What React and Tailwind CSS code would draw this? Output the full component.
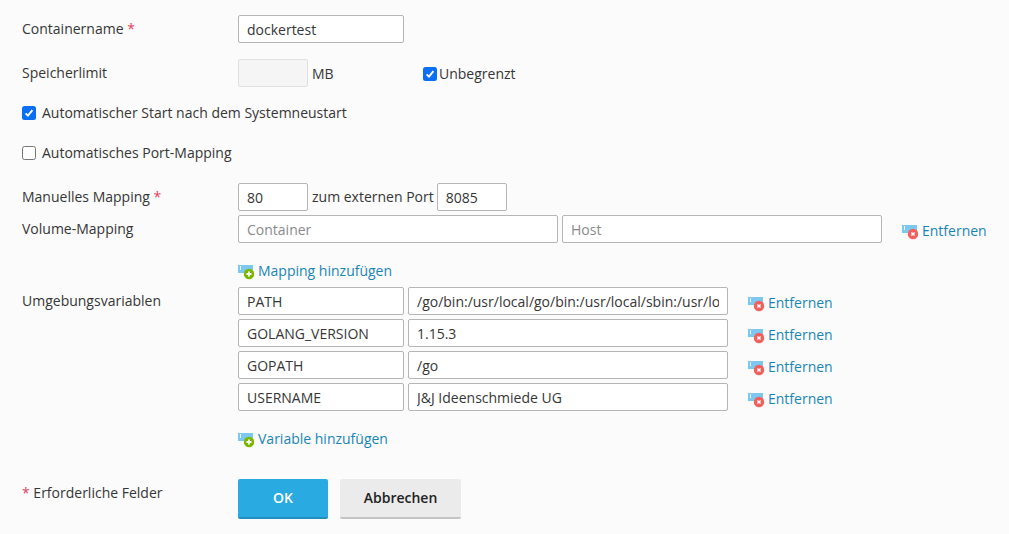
const inputCls = "h-[28px] box-border rounded-[2px] border border-[#b5b5b5] bg-white px-2 text-[14px] leading-[26px] text-[#363636] outline-none placeholder:text-[#8a8a8a] [font-family:'Open_Sans',sans-serif]";

function Field({ value, placeholder, className }) {
  return <input readOnly value={value} placeholder={placeholder} className={`${inputCls} ${className}`} />;
}

function Check({ checked }) {
  return checked ? (
    <span className="flex h-[14px] w-[14px] shrink-0 items-center justify-center rounded-[2.5px] bg-[#0b6ff5]">
      <svg width="10" height="10" viewBox="0 0 10 10" fill="none">
        <path d="M1.6 5.3 L4 7.7 L8.4 2.2" stroke="#fff" strokeWidth="1.9" />
      </svg>
    </span>
  ) : (
    <span className="h-[14px] w-[14px] shrink-0 rounded-[2.5px] border border-[#767676] bg-white" />
  );
}

function BaseIcon({ color, children }) {
  return (
    <svg width="16" height="15" viewBox="0 0 16 15" className="shrink-0 translate-y-px">
      <rect x="0" y="0" width="15" height="8" fill="#7cc8ee" />
      <rect x="2" y="1" width="1" height="4" fill="#e8f6fd" />
      <circle cx="11" cy="9" r="5.2" fill={color} />
      {children}
    </svg>
  );
}

function LinkAction({ kind, label, className = "" }) {
  return (
    <a className={`flex items-center gap-[4px] text-[14px] leading-[20px] text-[#1a85b5] ${className}`}>
      {kind === "add" ? (
        <BaseIcon color="#7ab800">
          <path d="M11 6.5v5M8.5 9h5" stroke="#fff" strokeWidth="1.8" />
        </BaseIcon>
      ) : (
        <BaseIcon color="#f25f5c">
          <path d="M9.4 7.4l3.2 3.2M12.6 7.4l-3.2 3.2" stroke="#fff" strokeWidth="1.4" />
        </BaseIcon>
      )}
      {label}
    </a>
  );
}

const Req = () => <span className="text-[#e2405f]">*</span>;

const envs = [
  ["PATH", "/go/bin:/usr/local/go/bin:/usr/local/sbin:/usr/local/bin"],
  ["GOLANG_VERSION", "1.15.3"],
  ["GOPATH", "/go"],
  ["USERNAME", "J&J Ideenschmiede UG"],
];

export default function App() {
  return (
    <div className="box-border h-[534px] w-[1009px] overflow-hidden bg-[#fbfbfb] pl-[22px] pt-[15px] text-[14px] leading-[20px] text-[#363636] [font-family:'Open_Sans',sans-serif]">
      <div className="flex h-[28px] items-center">
        <label className="w-[216px]">Containername <Req /></label>
        <Field value="dockertest" className="w-[166px]" />
      </div>

      <div className="mt-[16px] flex h-[28px] items-center">
        <label className="w-[216px]">Speicherlimit</label>
        <input readOnly className="box-border h-[28px] w-[70px] rounded-[2px] border border-[#e0e0e0] bg-[#f5f5f5]" />
        <span className="ml-[4px] w-[111px] translate-y-px">MB</span>
        <span className="flex items-center translate-y-px">
          <Check checked />
          <span className="ml-[2px]">Unbegrenzt</span>
        </span>
      </div>

      <div className="mt-[16px] flex h-[20px] items-center gap-[6px]">
        <Check checked />
        <span>Automatischer Start nach dem Systemneustart</span>
      </div>

      <div className="mt-[20px] flex h-[20px] items-center gap-[6px]">
        <Check />
        <span>Automatisches Port-Mapping</span>
      </div>

      <div className="mt-[20px] flex h-[28px] items-center">
        <label className="w-[216px]">Manuelles Mapping <Req /></label>
        <Field value="80" className="w-[70px]" />
        <span className="ml-[4px] mr-[3px]">zum externen Port</span>
        <Field value="8085" className="w-[70px]" />
      </div>

      <div className="mt-[4px] flex h-[28px] items-center">
        <label className="w-[216px]">Volume-Mapping</label>
        <Field placeholder="Container" value="" className="w-[320px]" />
        <Field placeholder="Host" value="" className="ml-[4px] w-[320px]" />
        <LinkAction kind="remove" label="Entfernen" className="ml-[20px] translate-y-[2px]" />
      </div>

      <div className="mt-[18px] pl-[216px]">
        <LinkAction kind="add" label="Mapping hinzufügen" />
      </div>

      <div className="mt-[6px] flex">
        <label className="w-[216px] pt-[4px]">Umgebungsvariablen</label>
        <div className="flex flex-col gap-[4px]">
          {envs.map(([k, v]) => (
            <div key={k} className="flex h-[28px] items-center">
              <Field value={k} className="w-[166px]" />
              <Field value={v} className="ml-[4px] w-[320px]" />
              <LinkAction kind="remove" label="Entfernen" className="ml-[20px] translate-y-[2px]" />
            </div>
          ))}
        </div>
      </div>

      <div className="mt-[18px] pl-[216px]">
        <LinkAction kind="add" label="Variable hinzufügen" />
      </div>

      <div className="mt-[30px] flex items-start">
        <label className="w-[216px] pt-[4px]"><Req /> Erforderliche Felder</label>
        <button className="box-border h-[40px] w-[90px] rounded-[2px] border-b-[2px] border-[#2190c0] bg-[#29aae1] text-[14px] font-semibold text-white">OK</button>
        <button className="ml-[12px] box-border h-[40px] w-[121px] rounded-[2px] border-b-[2px] border-[#c4c4c4] bg-[#ebebeb] text-[14px] font-semibold text-[#222]">Abbrechen</button>
      </div>
    </div>
  );
}
